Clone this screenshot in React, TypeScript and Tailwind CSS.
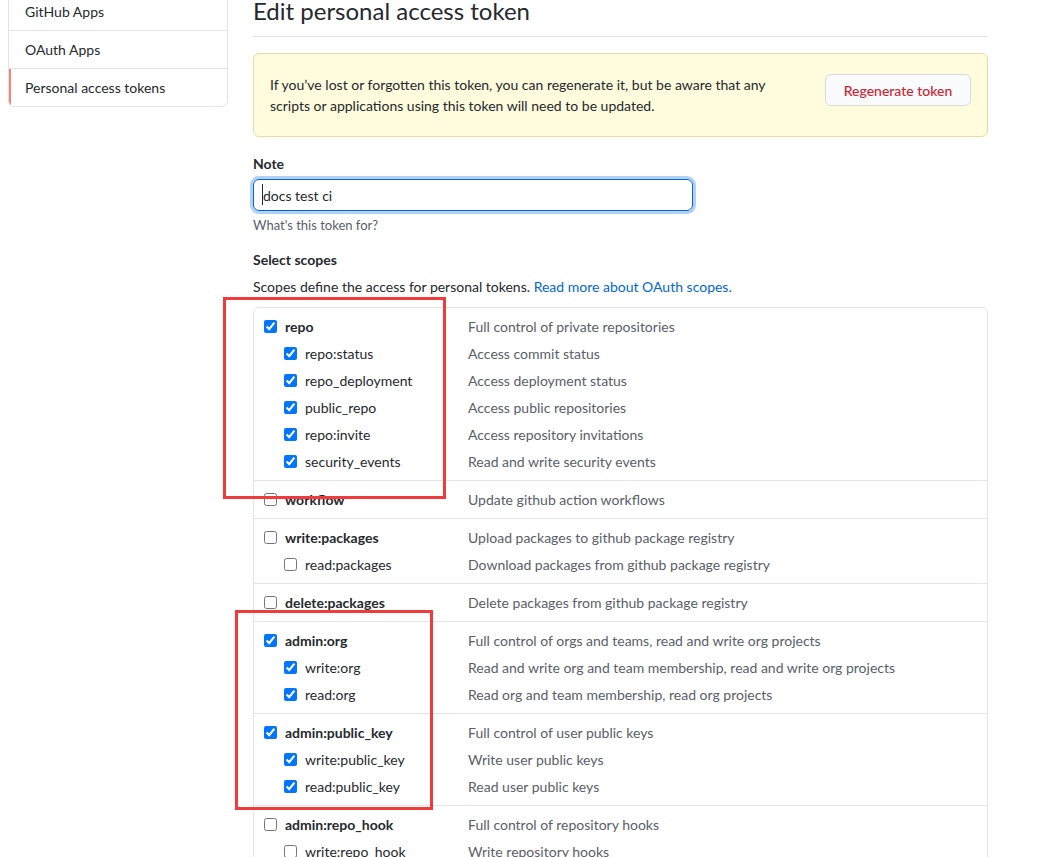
import React from 'react';

type Scope = { name: string; desc: string; checked: boolean; sub?: boolean };

const GROUPS: Scope[][] = [
  [
    { name: 'repo', desc: 'Full control of private repositories', checked: true },
    { name: 'repo:status', desc: 'Access commit status', checked: true, sub: true },
    { name: 'repo_deployment', desc: 'Access deployment status', checked: true, sub: true },
    { name: 'public_repo', desc: 'Access public repositories', checked: true, sub: true },
    { name: 'repo:invite', desc: 'Access repository invitations', checked: true, sub: true },
    { name: 'security_events', desc: 'Read and write security events', checked: true, sub: true },
  ],
  [{ name: 'workflow', desc: 'Update github action workflows', checked: false }],
  [
    { name: 'write:packages', desc: 'Upload packages to github package registry', checked: false },
    { name: 'read:packages', desc: 'Download packages from github package registry', checked: false, sub: true },
  ],
  [{ name: 'delete:packages', desc: 'Delete packages from github package registry', checked: false }],
  [
    { name: 'admin:org', desc: 'Full control of orgs and teams, read and write org projects', checked: true },
    { name: 'write:org', desc: 'Read and write org and team membership, read and write org projects', checked: true, sub: true },
    { name: 'read:org', desc: 'Read org and team membership, read org projects', checked: true, sub: true },
  ],
  [
    { name: 'admin:public_key', desc: 'Full control of user public keys', checked: true },
    { name: 'write:public_key', desc: 'Write user public keys', checked: true, sub: true },
    { name: 'read:public_key', desc: 'Read user public keys', checked: true, sub: true },
  ],
  [
    { name: 'admin:repo_hook', desc: 'Full control of repository hooks', checked: false },
    { name: 'write:repo_hook', desc: 'Write repository hooks', checked: false, sub: true },
    { name: 'read:repo_hook', desc: 'Read repository hooks', checked: false, sub: true },
  ],
];

const SIDEBAR = ['GitHub Apps', 'OAuth Apps', 'Personal access tokens'];

const ScopeRow = ({ scope }: { scope: Scope }) => (
  <div className="flex items-center h-[27px]">
    <label className={`flex items-center w-[204px] shrink-0 ${scope.sub ? 'pl-[20px]' : ''}`}>
      <input
        type="checkbox"
        defaultChecked={scope.checked}
        className="w-[13px] h-[13px] m-0 mr-[8px] accent-[#0075ff]"
      />
      <span className={scope.sub ? 'text-[#24292e]' : 'font-bold text-[#24292e]'}>{scope.name}</span>
    </label>
    <span className="text-[#586069] whitespace-nowrap">{scope.desc}</span>
  </div>
);

export default function App() {
  return (
    <div className="relative h-[857px] bg-white text-[14px] leading-[21px] text-[#24292e] font-['Lato',sans-serif] overflow-hidden">
      <div className="flex pl-[8px] gap-[25px]">
        {/* Sidebar */}
        <nav className="w-[220px] shrink-0 -mt-[8px] self-start border border-[#e1e4e8] rounded-[6px] overflow-hidden">
          {SIDEBAR.map((item, i) => (
            <div
              key={item}
              className={`relative px-[16px] py-[8px] ${i < SIDEBAR.length - 1 ? 'border-b border-[#e1e4e8]' : ''}`}
            >
              {i === SIDEBAR.length - 1 && (
                <span className="absolute left-0 top-0 bottom-0 w-[2px] bg-[#f9826c]" />
              )}
              {item}
            </div>
          ))}
        </nav>

        {/* Main */}
        <main className="w-[735px] shrink-0">
          <h2 className="-mt-[7px] text-[24px] leading-[36px] font-normal pb-[7px] border-b border-[#e1e4e8]">
            Edit personal access token
          </h2>

          <div className="mt-[16px] flex items-start border border-[#e9dba5] bg-[#fffbdd] rounded-[6px] px-[16px] py-[20px]">
            <p className="flex-1">
              If you’ve lost or forgotten this token, you can regenerate it, but be aware that any
              <br />
              scripts or applications using this token will need to be updated.
            </p>
            <button className="w-[146px] h-[32px] border border-[#d8dadd] rounded-[6px] bg-[#fafbfc] text-[#cb2431] font-medium">
              Regenerate token
            </button>
          </div>

          <div className="mt-[16px] font-bold">Note</div>
          <div className="relative mt-[5px] w-[440px]">
            <input
              readOnly
              value="docs test ci"
              className="w-full h-[32px] px-[9px] border border-[#0366d6] rounded-[6px] outline-none shadow-[0_0_0_3px_rgba(3,102,214,0.3)] text-[#24292e]"
            />
            <span className="absolute left-[9px] top-[5px] w-px h-[21px] bg-[#24292e]" />
          </div>
          <div className="mt-[4px] text-[13px] text-[#586069]">What's this token for?</div>

          <div className="mt-[13px] font-bold">Select scopes</div>
          <div className="mt-[6px]">
            Scopes define the access for personal tokens.{' '}
            <a className="text-[#0366d6]">Read more about OAuth scopes.</a>
          </div>

          <div className="mt-[10px] border border-[#e1e4e8] rounded-[6px]">
            {GROUPS.map((group, gi) => (
              <div
                key={gi}
                className={`px-[10px] py-[5px] ${gi < GROUPS.length - 1 ? 'border-b border-[#e1e4e8]' : ''}`}
              >
                {group.map((s) => (
                  <ScopeRow key={s.name} scope={s} />
                ))}
              </div>
            ))}
          </div>
        </main>
      </div>

      {/* Annotation boxes */}
      <div className="absolute left-[223px] top-[297px] w-[223px] h-[202px] border-[3px] border-[#ef3b3b] pointer-events-none" />
      <div className="absolute left-[235px] top-[610px] w-[198px] h-[200px] border-[3px] border-[#ef3b3b] pointer-events-none" />
    </div>
  );
}
